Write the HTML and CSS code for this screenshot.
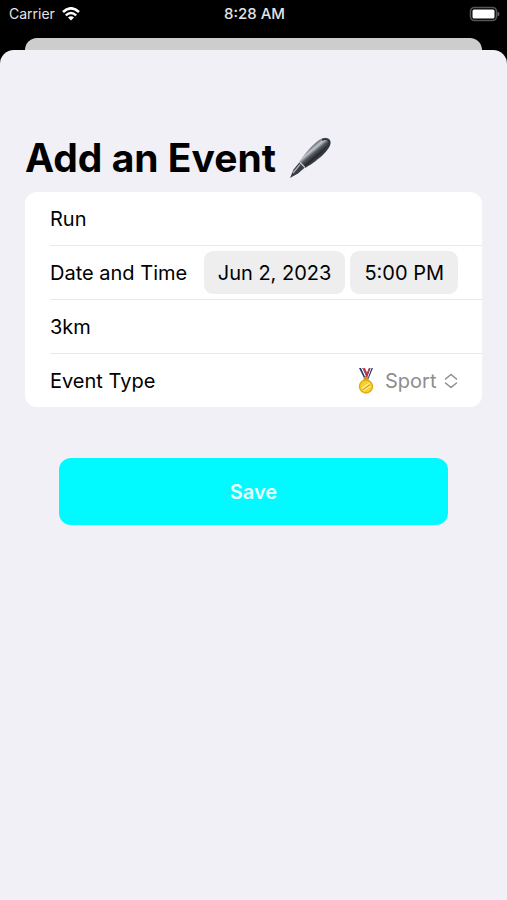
FILE: index.html
```html
<!DOCTYPE html>
<html lang="en">
<head>
    <meta charset="UTF-8">
    <meta name="viewport" content="width=device-width, initial-scale=1.0">
    <title>Add an Event</title>
    <link rel="stylesheet" href="styles.css">
</head>
<body>
    <header class="status-bar">
        <div class="carrier">
            <span>Carrier</span>
            <svg class="wifi" viewBox="0 0 18 14" aria-hidden="true">
                <path d="M1 5 Q9 -2.4 17 5" fill="none" stroke="#fff" stroke-width="2.6"/>
                <path d="M3.8 8.3 Q9 3.6 14.2 8.3" fill="none" stroke="#fff" stroke-width="2.4"/>
                <path d="M6 10.6 Q9 8 12 10.6 L9 13.6 Z" fill="#fff"/>
            </svg>
        </div>
        <time class="clock">8:28 AM</time>
        <svg class="battery" viewBox="0 0 32 16" aria-hidden="true">
            <rect x="2.5" y="1.5" width="26" height="13" rx="4" fill="none" stroke="#555" stroke-width="1.6"/>
            <rect x="4.5" y="3.5" width="22" height="9" rx="1.5" fill="#fff"/>
            <path d="M29.5 5.5 Q31.5 6.5 31.5 8 T29.5 10.5 Z" fill="#666"/>
        </svg>
    </header>

    <div class="back-sheet"></div>

    <main class="sheet">
        <h1 class="title">
            Add an Event
            <svg class="pen" viewBox="0 0 42 42" aria-hidden="true">
                <defs>
                    <linearGradient id="barrel" x1="0.3" y1="0.3" x2="0.65" y2="0.7">
                        <stop offset="0" stop-color="#3c4045"/>
                        <stop offset="0.3" stop-color="#c2c7cc"/>
                        <stop offset="0.5" stop-color="#555a60"/>
                        <stop offset="0.75" stop-color="#24272b"/>
                        <stop offset="1" stop-color="#50545a"/>
                    </linearGradient>
                </defs>
                <path d="M1 41 L4.5 32.5 L11 24.5 L16.5 30 L9 36.5 Z" fill="#3a3e44"/>
                <path d="M4 36 L11 27.5" stroke="#a9aeb3" stroke-width="1.4"/>
                <path d="M10 25 C16 16 26 4.5 33 1.5 C38 -0.4 42.4 2 41.4 7 C40 14 27 25 16 31 Z" fill="url(#barrel)"/>
                <path d="M33 3 C37.5 1 40.3 2.5 40.1 5.5 C39.5 10 35 15 31 18.5" fill="none" stroke="#33373d" stroke-width="2"/>
                <path d="M10.5 25 L16 30.5" stroke="#c3c8cc" stroke-width="1.2"/>
            </svg>
        </h1>

        <form class="form">
            <div class="card">
                <div class="row">
                    <input class="field" type="text" value="Run" aria-label="Event name">
                </div>
                <div class="row">
                    <span class="label" id="when">Date and Time</span>
                    <div class="pickers">
                        <button class="picker" type="button" aria-describedby="when">Jun 2, 2023</button>
                        <button class="picker" type="button" aria-describedby="when">5:00 PM</button>
                    </div>
                </div>
                <div class="row">
                    <input class="field" type="text" value="3km" aria-label="Notes">
                </div>
                <div class="row">
                    <label class="label" for="type">Event Type</label>
                    <div class="type">
                        <svg class="medal" viewBox="0 0 18 26" aria-hidden="true">
                            <path d="M2 0 H6 L11 10 L8 12 Z" fill="#26376f"/>
                            <path d="M4 0 H5.3 L10 10 L9 11 Z" fill="#fff"/>
                            <path d="M6 0 H8 L12 9 L10.5 11 Z" fill="#d5363b"/>
                            <path d="M12 0 H16 L11 12 L8 10 Z" fill="#26376f"/>
                            <path d="M12 0 H13.2 L9.6 10 L8.5 9 Z" fill="#d5363b"/>
                            <path d="M13.6 0 H14.6 L10.6 10.5 L10 10 Z" fill="#fff"/>
                            <rect x="6.5" y="9" width="5" height="3" rx="1" fill="#c99b16"/>
                            <circle cx="9" cy="18.5" r="7.2" fill="#e0ab12"/>
                            <circle cx="9" cy="18.5" r="5.8" fill="#f8d02e"/>
                            <path d="M5 20.5 L12.5 15 M6.5 22.5 L13.5 18" stroke="#fff09a" stroke-width="1.3"/>
                            <path d="M6 21.7 L13 16.8" stroke="#cf9810" stroke-width="1"/>
                        </svg>
                        <select class="select" id="type">
                            <option>Sport</option>
                        </select>
                        <svg class="chevrons" viewBox="0 0 14 16" aria-hidden="true">
                            <path d="M1.5 6 L7 1.5 L12.5 6 M1.5 10 L7 14.5 L12.5 10" fill="none" stroke="#8e8e8e" stroke-width="1.6" stroke-linecap="round" stroke-linejoin="round"/>
                        </svg>
                    </div>
                </div>
            </div>

            <button class="save" type="submit">Save</button>
        </form>
    </main>
</body>
</html>
```

FILE: styles.css
```css
* {
    box-sizing: border-box;
}
body {
    display: flex;
    flex-direction: column;
    min-height: 100vh;
    margin: 0;
    background: #000;
    color: #000;
    font-family: Inter, "Liberation Sans", sans-serif;
    font-size: 20px;
    line-height: 24px;
}
button,
input,
select {
    margin: 0;
    border: none;
    font: inherit;
    color: inherit;
}

/* Status bar */
.status-bar {
    display: grid;
    grid-template-columns: 1fr auto 1fr;
    align-items: center;
    height: 38px;
    padding: 0 7px 10px 9px;
    color: #e4e4e4;
    font-size: 14px;
    line-height: 20px;
}
.carrier {
    display: flex;
    align-items: center;
    gap: 7px;
}
.wifi {
    width: 18px;
    height: 14px;
}
.clock {
    font-size: 15px;
    font-weight: 500;
}
.battery {
    justify-self: end;
    width: 32px;
    height: 16px;
}

/* Sheets */
.back-sheet {
    height: 12px;
    margin: 0 25px;
    border-radius: 12px 12px 0 0;
    background: #cdcdcd;
}
.sheet {
    flex: 1;
    padding: 84px 25px 40px;
    border-radius: 14px 14px 0 0;
    background: #f1f0f6;
}
.title {
    display: flex;
    align-items: center;
    gap: 13px;
    height: 48px;
    margin: 0 0 10px;
    font-size: 39px;
    font-weight: 700;
    line-height: 48px;
}
.pen {
    width: 42px;
    height: 42px;
}

/* Form */
.card {
    padding-left: 25px;
    border-radius: 12px;
    background: #fff;
}
.row {
    display: flex;
    align-items: center;
    justify-content: space-between;
    box-sizing: content-box;
    height: 53px;
    padding-right: 24px;
    border-bottom: 1px solid #e8e8ea;
}
.row:last-child {
    border-bottom: none;
}
.field {
    width: 100%;
    padding: 0;
    background: none;
    outline: none;
}
.pickers {
    display: flex;
    gap: 5px;
}
.picker {
    height: 43px;
    padding: 0 14px;
    border-radius: 9px;
    background: #eeeeef;
}
.type {
    display: flex;
    align-items: center;
    color: #8e8e8e;
}
.medal {
    width: 18px;
    height: 26px;
    margin-right: 10px;
}
.select {
    appearance: none;
    padding: 0;
    background: none;
    outline: none;
}
.chevrons {
    width: 14px;
    height: 16px;
    margin-left: 7px;
}
.save {
    display: block;
    width: 85%;
    height: 67px;
    margin: 51px auto 0;
    border-radius: 12px;
    background: #00faff;
    color: #e8ffff;
    font-weight: 600;
}
```
